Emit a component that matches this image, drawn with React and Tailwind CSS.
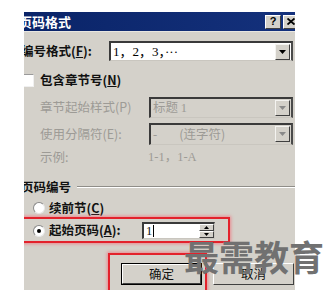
import React from "react";

const cjk = { fontFamily: '"Noto Sans CJK SC", "Noto Sans", sans-serif' };
const serif = { fontFamily: '"Liberation Serif", "Noto Sans CJK SC", serif' };

function DropBtn({ disabled }) {
  return (
    <div className="ml-auto mr-[1px] mt-[1px] flex h-[16px] w-[15px] items-center justify-center border border-t-[#f4f3f0] border-l-[#f4f3f0] border-r-[#404040] border-b-[#404040] bg-[#d4d1ca]">
      <svg width="7" height="4" viewBox="0 0 7 4">
        <path d="M0 0H7L3.5 4Z" fill={disabled ? "#8a8a8a" : "#000"} />
      </svg>
    </div>
  );
}

function Combo({ children, disabled, className }) {
  return (
    <div
      className={`flex items-start border-t-2 border-l-2 border-t-[#3a3a3a] border-l-[#3a3a3a] border-r-2 border-b border-r-[#4a4a4a] border-b-[#c9c6bf] ${
        disabled ? "bg-[#d4d1ca]" : "bg-white"
      } ${className}`}
    >
      <div className="flex h-full items-center pl-[2px]">{children}</div>
      <DropBtn disabled={disabled} />
    </div>
  );
}

export default function App() {
  return (
    <div className="relative h-[299px] w-[336px] overflow-hidden bg-white" style={cjk}>
      <div className="ml-[24px] mt-[12px] h-[278px] w-[271px] overflow-hidden bg-[#d4d1ca] relative">
        {/* title bar */}
        <div className="flex h-[20px] items-center bg-gradient-to-r from-[#0a2468] to-[#14317c] border-b border-b-[#e8e6e0]">
          <span className="ml-[-5px] text-[13px] font-bold leading-none text-white" style={cjk}>
            页码格式
          </span>
          <div className="ml-auto flex gap-[2px] mr-[-4px]">
            <div className="flex h-[14px] w-[16px] items-center justify-center border border-t-white border-l-white border-r-[#404040] border-b-[#404040] bg-[#d4d1ca] text-[11px] font-bold leading-none text-black" style={{ fontFamily: '"Liberation Sans", sans-serif' }}>
              ?
            </div>
            <div className="flex h-[14px] w-[16px] items-center justify-center border border-t-white border-l-white border-r-[#404040] border-b-[#404040] bg-[#d4d1ca]">
              <svg width="8" height="7" viewBox="0 0 8 7">
                <path d="M0.5 0.5L7.5 6.5M7.5 0.5L0.5 6.5" stroke="#000" strokeWidth="1.8" />
              </svg>
            </div>
          </div>
        </div>

        <div className="ml-[-3px] text-[12.5px] leading-none text-[#111]">
          {/* row 1 */}
          <div className="mt-[9px] flex h-[20px] items-center">
            <span className="w-[88px] font-semibold">
              编号格式(<span className="underline">F</span>):
            </span>
            <Combo className="h-[20px] w-[184px]">
              <span className="text-[13px] leading-none text-black" style={serif}>
                1，2，3，···
              </span>
            </Combo>
          </div>

          {/* checkbox */}
          <div className="mt-[12px] flex h-[14px] items-center">
            <div className="h-[13px] w-[13px] border-t border-l border-t-[#9a9a9a] border-l-[#9a9a9a] border-r border-b border-r-[#f0f0f0] border-b-[#f0f0f0] bg-white" />
            <span className="ml-[6px] font-semibold">
              包含章节号(<span className="underline">N</span>)
            </span>
          </div>

          {/* combo 2 */}
          <div className="mt-[10px] flex h-[21px] items-center">
            <span className="ml-[19px] w-[109px] text-[#9d9b96]">章节起始样式(P)</span>
            <Combo disabled className="h-[21px] w-[144px]">
              <span className="text-[12.5px] leading-none text-[#9d9b96]">
                标题 <span style={serif}>1</span>
              </span>
            </Combo>
          </div>

          {/* combo 3 */}
          <div className="mt-[5px] flex h-[22px] items-center">
            <span className="ml-[19px] w-[109px] text-[#9d9b96]">使用分隔符(E):</span>
            <Combo disabled className="h-[22px] w-[144px]">
              <span className="text-[12.5px] leading-none text-[#9d9b96]">
                <span style={serif}>-</span>
                <span className="ml-[22px]">(连字符)</span>
              </span>
            </Combo>
          </div>

          {/* sample */}
          <div className="mt-[4px] flex h-[16px] items-center text-[#9d9b96]">
            <span className="ml-[19px] w-[108px]">示例:</span>
            <span className="text-[12.5px]" style={serif}>
              1-1，1-A
            </span>
          </div>

          {/* section */}
          <div className="mt-[14px] flex h-[16px] items-center">
            <span className="font-semibold">页码编号</span>
            <div className="ml-[6px] h-[2px] flex-1 border-t border-t-[#8f8d88] border-b border-b-white" />
          </div>

          {/* radio 1 */}
          <div className="mt-[5px] flex h-[16px] items-center">
            <div className="ml-[12px] h-[12px] w-[12px] rounded-full border border-t-[#8a8a8a] border-l-[#8a8a8a] border-r-[#e8e8e8] border-b-[#e8e8e8] bg-white" />
            <span className="ml-[4px] font-semibold">
              续前节(<span className="underline">C</span>)
            </span>
          </div>

          {/* radio 2 */}
          <div className="mt-[6px] flex h-[17px] items-center">
            <div className="ml-[12px] flex h-[12px] w-[12px] items-center justify-center rounded-full border border-t-[#8a8a8a] border-l-[#8a8a8a] border-r-[#e8e8e8] border-b-[#e8e8e8] bg-white">
              <div className="h-[4px] w-[4px] rounded-full bg-black" />
            </div>
            <span className="ml-[4px] w-[93px] font-semibold">
              起始页码(<span className="underline">A</span>):
            </span>
            <div className="flex h-[17px] w-[73px] items-stretch border-t-2 border-l-2 border-t-[#3a3a3a] border-l-[#3a3a3a] border-r border-b border-r-[#c9c6bf] border-b-[#c9c6bf] bg-white">
              <span className="ml-[2px] flex items-center text-[12.5px] leading-none" style={serif}>
                1<span className="ml-[1px] inline-block h-[12px] w-[1px] bg-black" />
              </span>
              <div className="ml-auto flex w-[15px] flex-col">
                <div className="flex flex-1 items-center justify-center border border-t-white border-l-white border-r-[#404040] border-b-[#404040] bg-[#d4d1ca]">
                  <svg width="5" height="3" viewBox="0 0 5 3">
                    <path d="M0 3H5L2.5 0Z" fill="#000" />
                  </svg>
                </div>
                <div className="flex flex-1 items-center justify-center border border-t-white border-l-white border-r-[#404040] border-b-[#404040] bg-[#d4d1ca]">
                  <svg width="5" height="3" viewBox="0 0 5 3">
                    <path d="M0 0H5L2.5 3Z" fill="#000" />
                  </svg>
                </div>
              </div>
            </div>
          </div>

          {/* buttons */}
          <div className="mt-[24px] flex h-[22px]">
            <div className="ml-[100px] flex h-[22px] w-[81px] items-center justify-center border border-black">
              <div className="flex h-full w-full items-center justify-center border border-t-white border-l-white border-r-[#404040] border-b-[#404040] bg-[#d4d1ca]">
                确定
              </div>
            </div>
            <div className="ml-[11px] flex h-[22px] w-[81px] items-center justify-center border border-t-white border-l-white border-r-[#404040] border-b-[#404040] bg-[#d4d1ca]">
              取消
            </div>
          </div>
        </div>

        {/* red annotation boxes */}
        <div className="absolute left-[-2px] top-[205px] h-[26px] w-[208px] border-2 border-[#e3222c] shadow-[0_0_3px_1px_rgba(240,120,130,0.8)]" />
        <div className="absolute left-[84px] top-[241px] h-[44px] w-[99px] border-2 border-[#e3222c] shadow-[0_0_3px_1px_rgba(240,120,130,0.8)]" />
      </div>

      {/* watermark */}
      <div
        className="absolute left-[184px] top-[238px] text-[35px] font-bold leading-none tracking-[0px] text-[#717171]"
        style={cjk}
      >
        最需教育
      </div>
    </div>
  );
}
